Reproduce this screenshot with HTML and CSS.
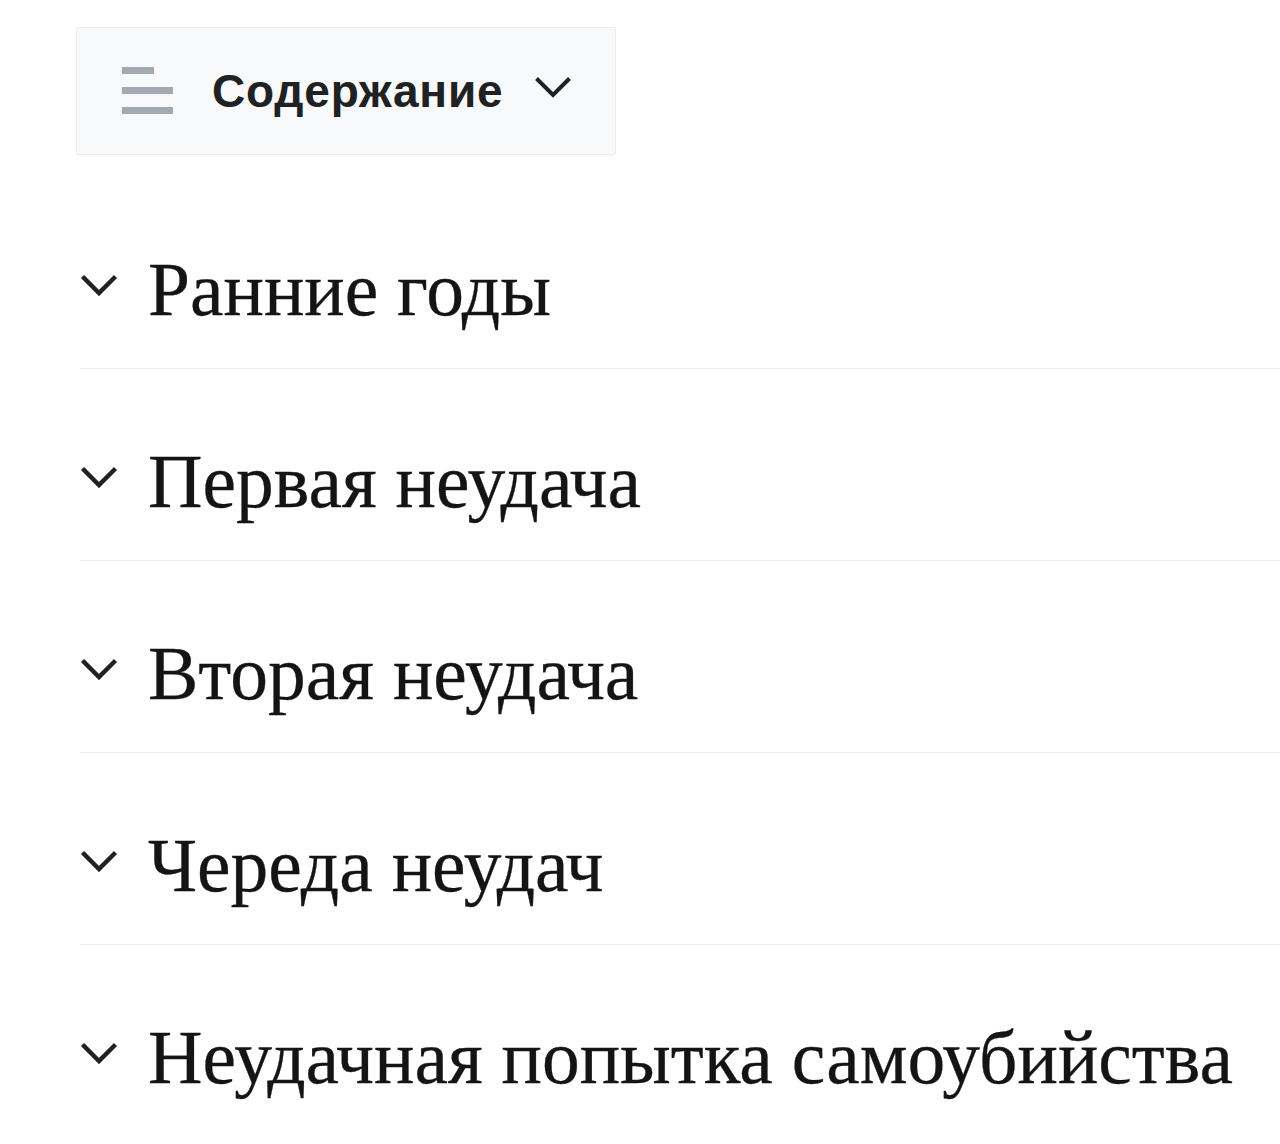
FILE: index.html
```html
<!DOCTYPE html>
<html lang="ru">
<head>
<meta charset="utf-8">
<title>Содержание</title>
<link rel="stylesheet" href="styles.css">
</head>
<body>
<div class="page">
  <button class="toc-button" type="button">
    <svg class="toc-icon" width="51" height="47" viewBox="0 0 51 47" aria-hidden="true">
      <rect x="0" y="0" width="32" height="7" fill="#a2a9b1"/>
      <rect x="0" y="20" width="51" height="7" fill="#a2a9b1"/>
      <rect x="0" y="40" width="51" height="7" fill="#a2a9b1"/>
    </svg>
    <span class="toc-label">Содержание</span>
    <svg class="toc-chevron" width="38" height="22" viewBox="0 0 38 22" aria-hidden="true">
      <path d="M2.5 2.5 L19 19 L35.5 2.5" fill="none" stroke="#202122" stroke-width="4"/>
    </svg>
  </button>

  <ul class="sections">
    <li class="section">
      <svg class="chev" width="38" height="22" viewBox="0 0 38 22" aria-hidden="true"><path d="M2.5 2.5 L19 19 L35.5 2.5" fill="none" stroke="#202122" stroke-width="4.5"/></svg>
      <h2 class="heading">Ранние годы</h2>
    </li>
    <li class="section">
      <svg class="chev" width="38" height="22" viewBox="0 0 38 22" aria-hidden="true"><path d="M2.5 2.5 L19 19 L35.5 2.5" fill="none" stroke="#202122" stroke-width="4.5"/></svg>
      <h2 class="heading">Первая неудача</h2>
    </li>
    <li class="section">
      <svg class="chev" width="38" height="22" viewBox="0 0 38 22" aria-hidden="true"><path d="M2.5 2.5 L19 19 L35.5 2.5" fill="none" stroke="#202122" stroke-width="4.5"/></svg>
      <h2 class="heading">Вторая неудача</h2>
    </li>
    <li class="section">
      <svg class="chev" width="38" height="22" viewBox="0 0 38 22" aria-hidden="true"><path d="M2.5 2.5 L19 19 L35.5 2.5" fill="none" stroke="#202122" stroke-width="4.5"/></svg>
      <h2 class="heading">Череда неудач</h2>
    </li>
    <li class="section last">
      <svg class="chev" width="38" height="22" viewBox="0 0 38 22" aria-hidden="true"><path d="M2.5 2.5 L19 19 L35.5 2.5" fill="none" stroke="#202122" stroke-width="4.5"/></svg>
      <h2 class="heading">Неудачная попытка самоубийства</h2>
    </li>
  </ul>
</div>
</body>
</html>
```

FILE: styles.css
```css
html, body {
  margin: 0;
  padding: 0;
  background: #ffffff;
}

.page {
  padding: 27px 0 0 0;
  overflow: hidden;
}

.toc-button {
  display: flex;
  align-items: center;
  box-sizing: border-box;
  width: 540px;
  height: 128px;
  margin: 0 0 0 76px;
  padding: 0 0 0 45px;
  background: #f8f9fa;
  border: 1px solid #eaecf0;
  border-radius: 2px;
  font: inherit;
  cursor: pointer;
}

.toc-icon {
  flex: none;
  margin-top: -2px;
}

.toc-label {
  margin-left: 39px;
  font-family: "Liberation Sans", Arial, sans-serif;
  font-weight: 700;
  font-size: 46px;
  letter-spacing: 0.8px;
  color: #202122;
  line-height: 1;
}

.toc-chevron {
  flex: none;
  margin-left: 31px;
  margin-top: -8px;
}

.sections {
  list-style: none;
  margin: 0;
  padding: 0 0 0 80px;
}

.section {
  display: flex;
  align-items: flex-start;
  padding: 65px 0 30px 0;
  border-bottom: 1px solid #eaecf0;
}

.section:first-child {
  padding-top: 87px;
}

.section.last {
  border-bottom: none;
}

.chev {
  flex: none;
  margin: 32px 30px 0 0;
}

.heading {
  margin: 0;
  font-family: "Liberation Serif", "Times New Roman", serif;
  font-weight: 400;
  font-size: 75.5px;
  line-height: 96px;
  color: #141414;
  -webkit-text-stroke: 0.3px #141414;
  white-space: nowrap;
}
```
